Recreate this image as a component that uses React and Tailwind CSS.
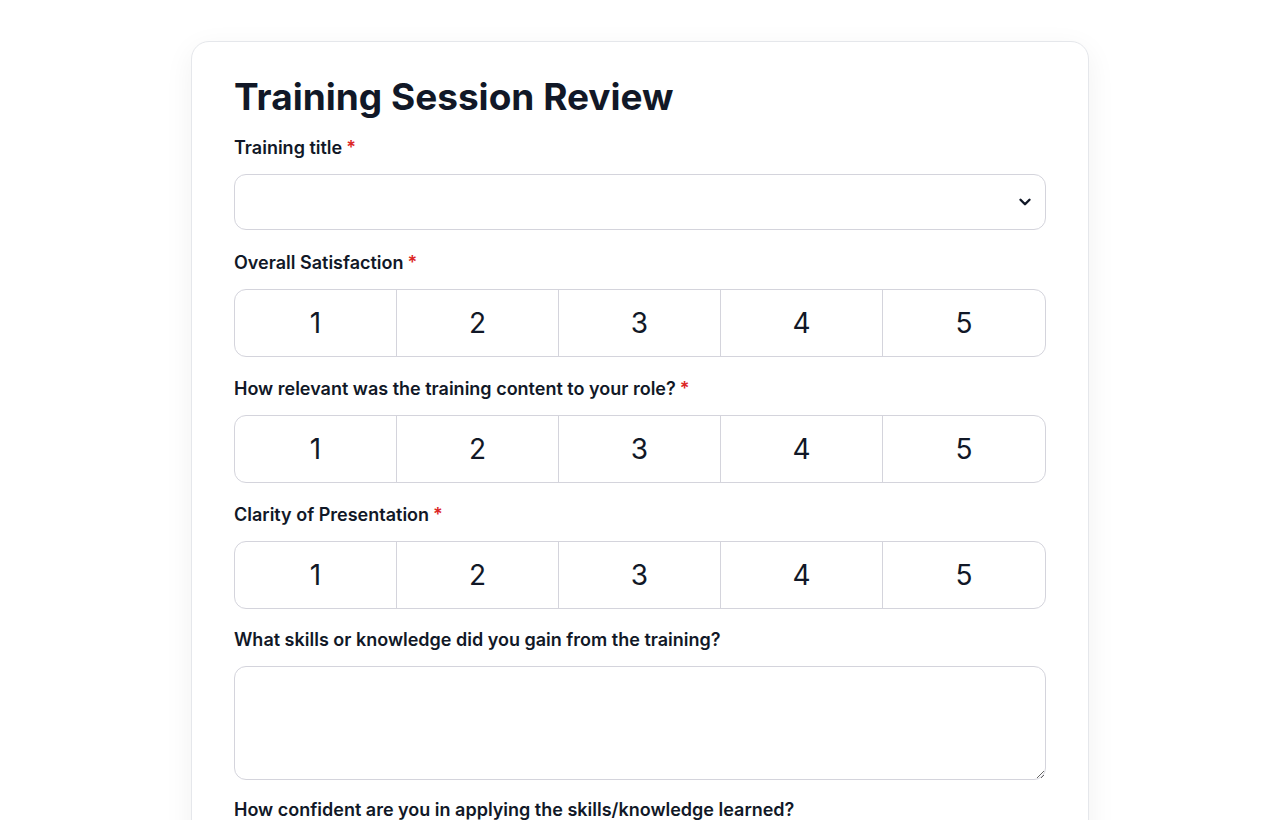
import React from "react";

const Label = ({ children, required }) => (
  <div className="text-[18px] leading-6 font-semibold text-[#111827] mb-[14px]">
    {children}
    {required && <span className="text-[#dc2626] ml-1">*</span>}
  </div>
);

const Rating = () => (
  <div className="grid grid-cols-5 h-[68px] border border-[#d4d4dc] rounded-xl overflow-hidden">
    {[1, 2, 3, 4, 5].map((n, i) => (
      <div
        key={n}
        className={
          "flex items-center justify-center text-[28px] font-normal text-[#111827] " +
          (i < 4 ? "border-r border-[#d4d4dc]" : "")
        }
      >
        {n}
      </div>
    ))}
  </div>
);

export default function App() {
  return (
    <div className="min-h-screen bg-white pt-[41px] pb-10" style={{ fontFamily: "Inter, 'Noto Sans', sans-serif" }}>
      <div className="mx-auto w-[898px] bg-white border border-[#e5e7eb] rounded-[18px] shadow-[0_8px_30px_rgba(0,0,0,0.06)] px-[42px] pt-[35px] pb-10">
        <h1 className="text-[37px] leading-10 font-bold text-[#111827] mb-[19px]">
          Training Session Review
        </h1>

        <div className="mb-[21px]">
          <Label required>Training title</Label>
          <div className="h-[56px] border border-[#d4d4dc] rounded-xl flex items-center justify-end pr-[11px]">
            <svg width="18" height="18" viewBox="0 0 24 24" fill="none" stroke="#111827" strokeWidth="3.2" strokeLinecap="round" strokeLinejoin="round">
              <path d="M6 9l6 6 6-6" />
            </svg>
          </div>
        </div>

        <div className="mb-5">
          <Label required>Overall Satisfaction</Label>
          <Rating />
        </div>

        <div className="mb-5">
          <Label required>How relevant was the training content to your role?</Label>
          <Rating />
        </div>

        <div className="mb-[19px]">
          <Label required>Clarity of Presentation</Label>
          <Rating />
        </div>

        <div className="mb-[18px]">
          <Label>What skills or knowledge did you gain from the training?</Label>
          <textarea className="block w-full h-[114px] border border-[#d4d4dc] rounded-xl outline-none p-3" />
        </div>

        <div className="mb-5">
          <Label>How confident are you in applying the skills/knowledge learned?</Label>
          <Rating />
        </div>
      </div>
    </div>
  );
}
